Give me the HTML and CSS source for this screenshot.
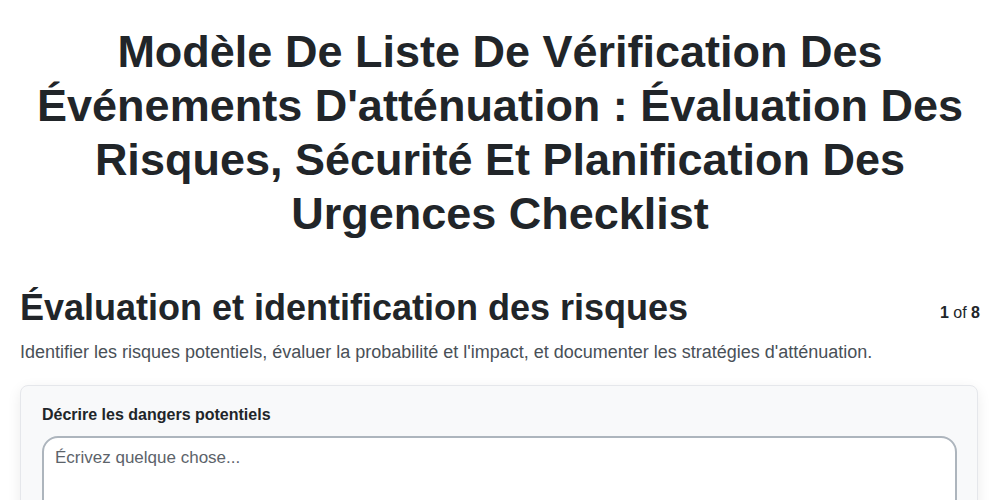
FILE: index.html
```
<!DOCTYPE html>
<html lang="fr">

<head>
    <meta charset="UTF-8">
    <meta name="viewport" content="width=device-width, initial-scale=1.0">
    <title>Liste de vérification</title>
    <link rel="stylesheet" href="styles.css">
</head>

<body>
    <div id="page">
        <h1 class="page-title">Modèle De Liste De Vérification Des Événements D'atténuation : Évaluation Des Risques, Sécurité Et Planification Des Urgences Checklist</h1>

        <div class="section-head">
            <h2 class="section-title">Évaluation et identification des risques</h2>
            <span class="step"><b>1</b> of <b>8</b></span>
        </div>
        <p class="section-desc">Identifier les risques potentiels, évaluer la probabilité et l'impact, et documenter les stratégies d'atténuation.</p>

        <div class="card">
            <label class="field-label" for="dangers">Décrire les dangers potentiels</label>
            <textarea id="dangers" class="field" placeholder="Écrivez quelque chose..."></textarea>
        </div>
    </div>
</body>

</html>
```

FILE: styles.css
```
html,
body {
    margin: 0;
    height: 100%;
    overflow: hidden;
    background-color: #fff;
}

body {
    font-family: "Liberation Sans", Arial, sans-serif;
    color: #212529;
}

#page {
    padding: 25px 20px 0 20px;
}

.page-title {
    margin: 0 0 45px 0;
    padding: 0 15px;
    font-size: 45px;
    line-height: 54px;
    font-weight: 700;
    text-align: center;
}

.section-head {
    display: flex;
    justify-content: space-between;
    align-items: baseline;
}

.section-title {
    margin: 0;
    font-size: 36px;
    line-height: 43px;
    font-weight: 700;
}

.step {
    font-size: 16px;
    line-height: 24px;
    position: relative;
    top: -2px;
}

.section-desc {
    margin: 10px 0 19px 0;
    font-size: 18px;
    line-height: 27px;
    color: #495057;
}

.card {
    display: flex;
    flex-direction: column;
    margin-right: 2px;
    padding: 17px 20px 20px 21px;
    background-color: #f8f9fa;
    border: 1px solid #e5e7eb;
    border-radius: 8px;
    box-shadow: 0 4px 14px rgba(0, 0, 0, 0.08);
}

.field-label {
    margin-bottom: 9px;
    font-size: 16px;
    line-height: 24px;
    font-weight: 700;
}

.field {
    height: 120px;
    padding: 7px 11px;
    font-family: "Liberation Sans", Arial, sans-serif;
    font-size: 17px;
    line-height: 25px;
    color: #212529;
    background-color: #fff;
    border: 2px solid #adb5bd;
    border-radius: 16px;
    resize: none;
}

.field::placeholder {
    color: #5c636a;
}
```
